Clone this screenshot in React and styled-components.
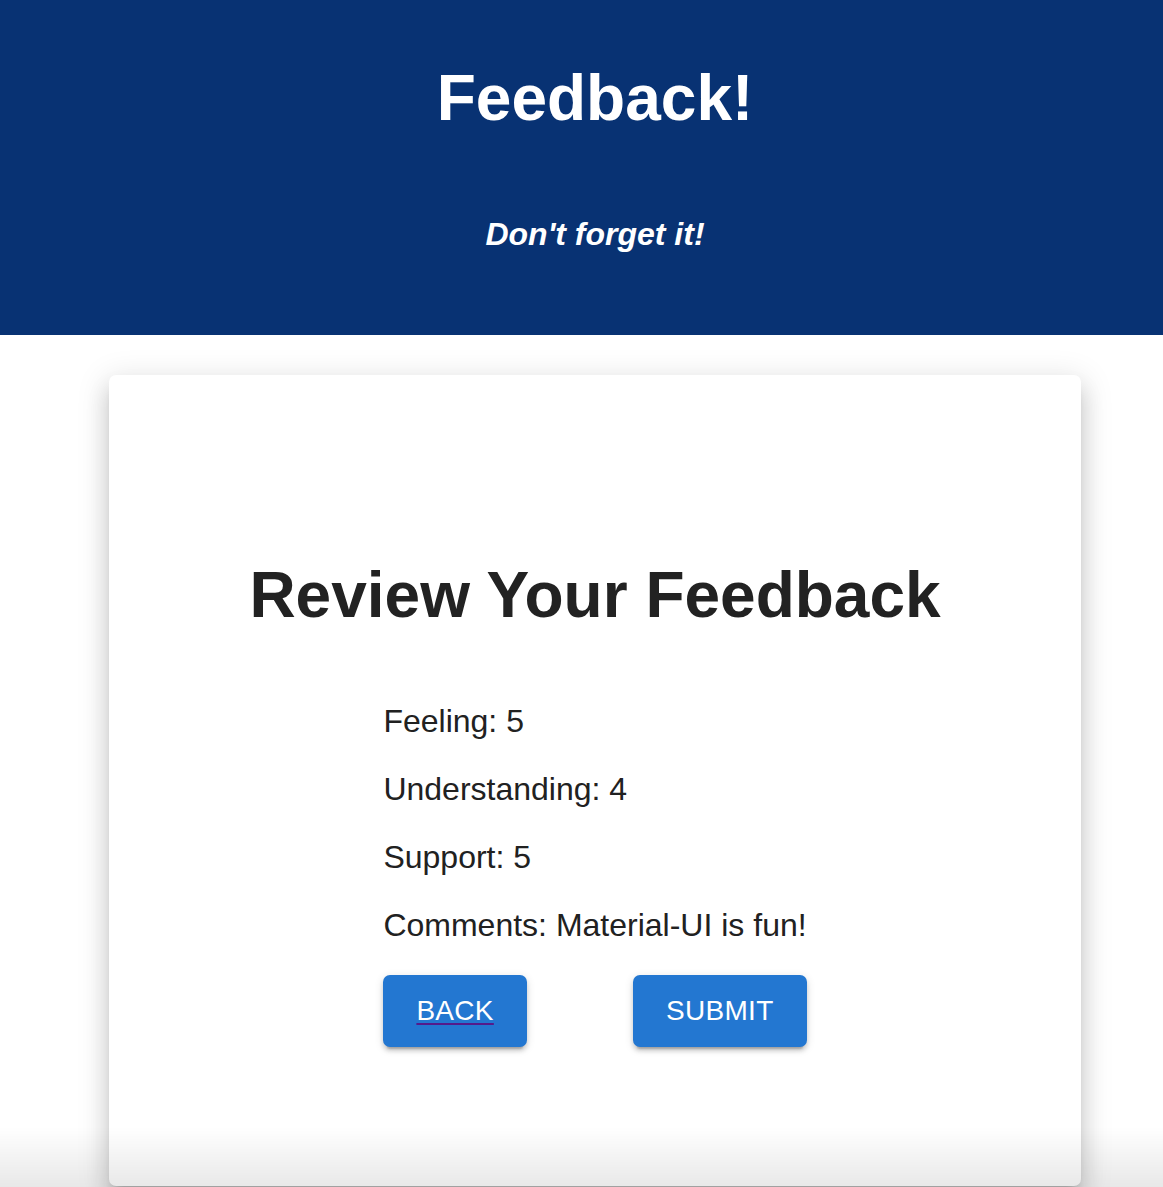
import React from "react";
import styled, { createGlobalStyle } from "styled-components";

const Global = createGlobalStyle`
  html, body { margin: 0; padding: 0; background: #fff; overflow-x: hidden; }
  body { font-family: "Liberation Sans", Arial, Helvetica, sans-serif; }
`;

const Page = styled.div`
  width: 1190px;
  min-height: 1187px;
`;

const Header = styled.header`
  background: #083273;
  color: #fff;
  text-align: center;
  padding: 61px 0 82px;
`;

const Title = styled.h1`
  margin: 0;
  font-size: 64px;
  line-height: 74px;
  font-weight: 700;
`;

const Subtitle = styled.h2`
  margin: 81px 0 0;
  font-size: 32px;
  line-height: 37px;
  font-weight: 700;
  font-style: italic;
`;

const Card = styled.section`
  margin: 40px 109px 0;
  background: #fff;
  border-radius: 7px;
  box-shadow: 0 10px 10px -6px rgba(0, 0, 0, 0.2),
    0 16px 22px 2px rgba(0, 0, 0, 0.12), 0 6px 30px 5px rgba(0, 0, 0, 0.1);
  padding: 183px 0 139px;
  display: flex;
  flex-direction: column;
  align-items: center;
  color: #212121;
`;

const CardTitle = styled.h2`
  margin: 0;
  font-size: 64px;
  line-height: 74px;
  font-weight: 700;
  color: #222;
`;

const Summary = styled.div`
  margin-top: 71px;
  display: flex;
  flex-direction: column;
  gap: 32px;
  width: max-content;
`;

const Row = styled.p`
  margin: 0;
  font-size: 32px;
  line-height: 36px;
`;

const Actions = styled.div`
  display: flex;
  justify-content: space-between;
`;

const Button = styled.button`
  height: 72px;
  padding: 0 33px;
  border: none;
  border-radius: 7px;
  background: #2377d1;
  color: #fff;
  font-family: "Liberation Sans", Arial, sans-serif;
  font-size: 28px;
  letter-spacing: 0.3px;
  text-transform: uppercase;
  box-shadow: 0 6px 2px -4px rgba(0, 0, 0, 0.2), 0 4px 4px 0 rgba(0, 0, 0, 0.14),
    0 2px 10px 0 rgba(0, 0, 0, 0.12);
  cursor: pointer;
`;

const LinkLabel = styled.span`
  text-decoration: underline;
  text-decoration-color: #551a8b;
  text-decoration-thickness: 2px;
  text-underline-offset: 3px;
`;

const BottomFade = styled.div`
  position: fixed;
  left: 0;
  right: 0;
  bottom: 0;
  height: 60px;
  pointer-events: none;
  background: linear-gradient(to bottom, rgba(0, 0, 0, 0), rgba(0, 0, 0, 0.09));
`;

export default function App() {
  const rows = [
    ["Feeling", "5"],
    ["Understanding", "4"],
    ["Support", "5"],
    ["Comments", "Material-UI is fun!"],
  ];
  return (
    <Page>
      <Global />
      <Header>
        <Title>Feedback!</Title>
        <Subtitle>Don't forget it!</Subtitle>
      </Header>
      <Card>
        <CardTitle>Review Your Feedback</CardTitle>
        <Summary>
          {rows.map(([k, v]) => (
            <Row key={k}>
              {k}: {v}
            </Row>
          ))}
          <Actions>
            <Button>
              <LinkLabel>Back</LinkLabel>
            </Button>
            <Button>Submit</Button>
          </Actions>
        </Summary>
      </Card>
      <BottomFade />
    </Page>
  );
}
